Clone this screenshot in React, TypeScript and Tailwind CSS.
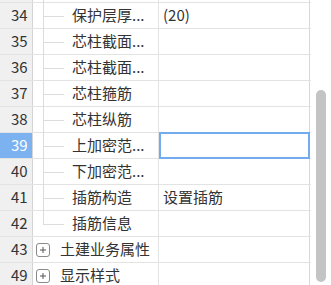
import React from "react"

type Row = {
    no: number
    label: string
    value?: string
    kind: "child" | "last" | "group"
    selected?: boolean
}

const rows: Row[] = [
    { no: 34, label: "保护层厚...", value: "(20)", kind: "child" },
    { no: 35, label: "芯柱截面...", kind: "child" },
    { no: 36, label: "芯柱截面...", kind: "child" },
    { no: 37, label: "芯柱箍筋", kind: "child" },
    { no: 38, label: "芯柱纵筋", kind: "child" },
    { no: 39, label: "上加密范...", kind: "child", selected: true },
    { no: 40, label: "下加密范...", kind: "child" },
    { no: 41, label: "插筋构造", value: "设置插筋", kind: "child" },
    { no: 42, label: "插筋信息", kind: "last" },
    { no: 43, label: "土建业务属性", kind: "group" },
    { no: 49, label: "显示样式", kind: "group" },
]

const PlusBox = () => (
    <div className="w-[14px] h-[14px] border border-[#8a8a8a] rounded-[3px] flex items-center justify-center bg-white">
        <svg width="8" height="8" viewBox="0 0 8 8">
            <path d="M4 1v6M1 4h6" stroke="#555" strokeWidth="1" />
        </svg>
    </div>
)

const TreeRow = ({ row }: { row: Row }) => {
    return (
        <div className="flex h-[26px] border-b border-[#e3e3e3]">
            <div
                className={
                    row.selected
                        ? "w-[33px] shrink-0 bg-[#7cb2ef] text-white border-r border-[#d4d4d4] flex items-center pl-[11px]"
                        : "w-[33px] shrink-0 bg-[#f0f0f0] text-[#333] border-r border-[#d4d4d4] flex items-center pl-[11px]"
                }
            >
                {row.no}
            </div>
            <div className="w-[126px] shrink-0 border-r border-[#e3e3e3] flex items-center">
                {row.kind === "group" ? (
                    <div className="flex items-center">
                        <div className="ml-[3px] mr-[10px]"><PlusBox /></div>
                        <span>{row.label}</span>
                    </div>
                ) : (
                    <div className="flex items-center h-full">
                        <div className="relative w-[39px] h-full shrink-0">
                            <div
                                className={
                                    row.kind === "last"
                                        ? "absolute left-[10px] top-[-1px] h-[14px] border-l border-[#dcdcdc]"
                                        : "absolute left-[10px] top-[-1px] bottom-[-1px] border-l border-[#dcdcdc]"
                                }
                            />
                            <div className="absolute left-[10px] right-[8px] top-[13px] border-t border-[#dcdcdc]" />
                        </div>
                        <span>{row.label}</span>
                    </div>
                )}
            </div>
            <div
                className={
                    row.selected
                        ? "w-[151px] shrink-0 border-2 border-[#72abee] mt-[-1px] mb-[-1px] flex items-center"
                        : "w-[151px] shrink-0 border-r border-[#d8d8d8] flex items-center pl-[4px]"
                }
            >
                {row.value}
            </div>
        </div>
    )
}

export default function App() {
    return (
        <div
            className="w-[331px] h-[285px] overflow-hidden bg-white flex text-[15px] text-[#333]"
            style={{ fontFamily: '"Noto Sans CJK SC", "Noto Sans", sans-serif' }}
        >
            <div className="w-[311px] shrink-0">
                <div className="flex h-[3px] border-b border-[#e3e3e3]">
                    <div className="w-[33px] bg-[#f0f0f0] border-r border-[#d4d4d4]" />
                    <div className="w-[126px] border-r border-[#e3e3e3] relative">
                        <div className="absolute left-[10px] top-0 bottom-[-1px] border-l border-[#dcdcdc]" />
                    </div>
                    <div className="w-[151px] border-r border-[#d8d8d8]" />
                </div>
                {rows.map(r => (
                    <TreeRow key={r.no} row={r} />
                ))}
            </div>
            <div className="flex-1 flex justify-center pt-[90px]">
                <div className="w-[10px] h-[192px] bg-[#c4c4c4] rounded-full" />
            </div>
        </div>
    )
}
